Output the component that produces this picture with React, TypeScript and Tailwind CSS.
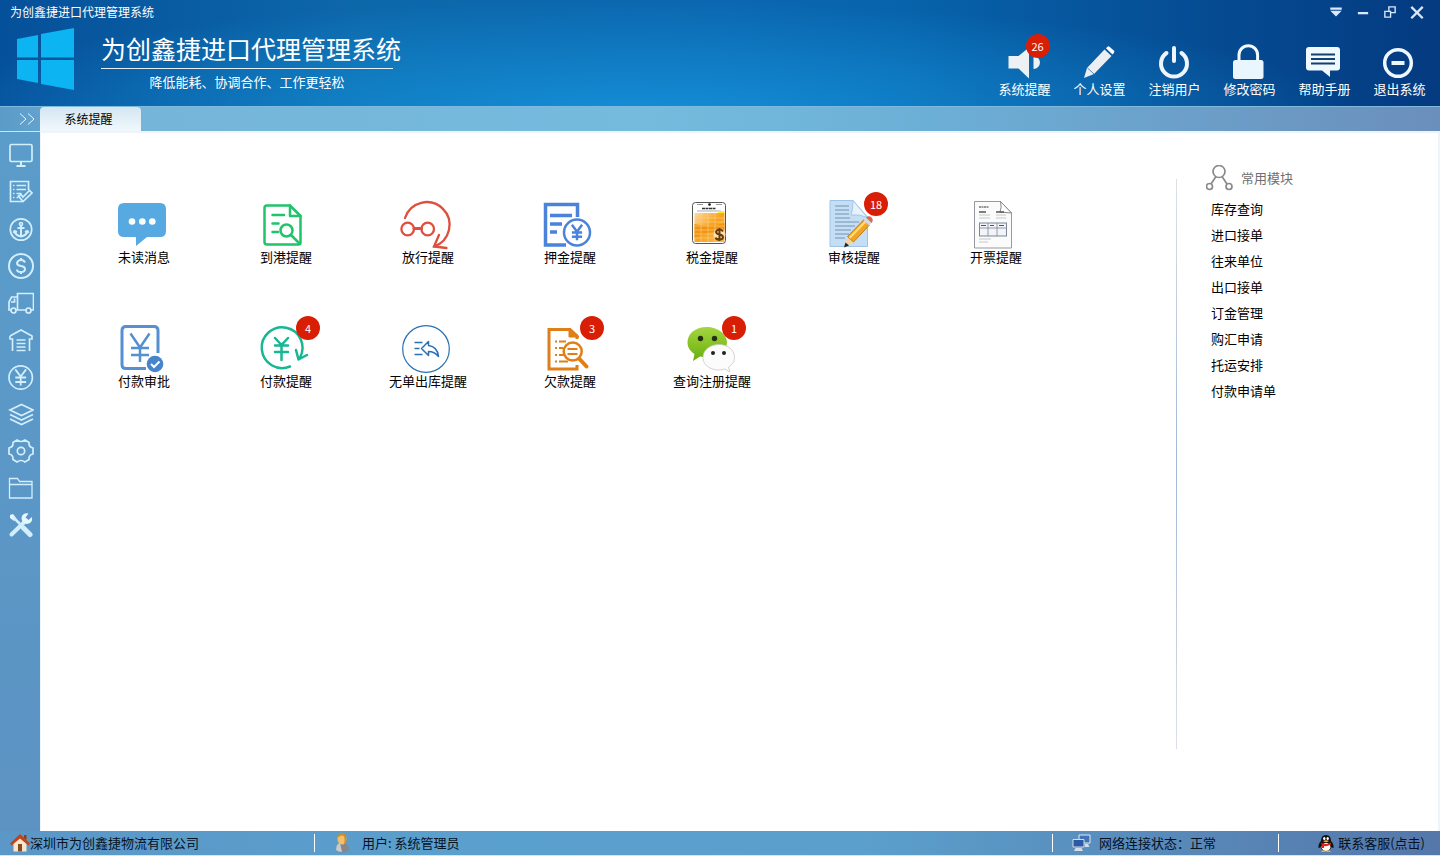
import type { ReactNode } from "react";

interface Item {
  label: string;
  icon: ReactNode;
  badge?: number;
}

const YEN = "M-6 -9L0 -1l6 -8M0 -1v10M-6 0h12M-6 5h12";

const TOOLBAR: Item[] = [
  {
    label: "系统提醒",
    badge: 26,
    icon: (
      <>
        <path d="M3.5 12h10L24 3.5v31L13.5 24.5h-10z" fill="#eef1f4" />
        <path d="M28.5 12a6.5 6.5 0 0 1 0 13z" fill="#eef1f4" />
      </>
    ),
  },
  {
    label: "个人设置",
    icon: (
      <>
        <path d="M7 24L24.5 5.500l7 6.500L14 30 4 34z" fill="#eceff2" />
        <path d="M26 4.2l1.500-1.500q1-.7 2 0l4.500 4q.8 1 0 2L32.500 10.500z" fill="#fff" />
        <path d="M7.500 24l6.500 6" stroke="#5b87b5" strokeWidth="1" />
      </>
    ),
  },
  {
    label: "注销用户",
    icon: (
      <g fill="none" stroke="#eef6fc" strokeWidth="4" strokeLinecap="round">
        <path d="M11.5 9a13 13 0 1 0 15 0" />
        <path d="M19 4v13" />
      </g>
    ),
  },
  {
    label: "修改密码",
    icon: (
      <>
        <path d="M9 18v-7a9.3 9.3 0 0 1 18.6 0v7" fill="none" stroke="#f4fafe" strokeWidth="3" />
        <rect x="3" y="16" width="30.5" height="19" rx="2.5" fill="#eaf6fe" />
      </>
    ),
  },
  {
    label: "帮助手册",
    icon: (
      <>
        <path d="M4 3h28q3 0 3 3v17.500q0 3-3 3h-7V33l-8-6.500H4q-3 0-3-3V6q0-3 3-3z" fill="#f0f9ff" />
        <path d="M6 10.500h24M6 15h24M6 19.500h24" stroke="#123f74" strokeWidth="2" />
      </>
    ),
  },
  {
    label: "退出系统",
    icon: (
      <g fill="none" stroke="#eef7fe">
        <circle cx="18" cy="19" r="13.300" strokeWidth="3.5" />
        <path d="M11.5 19h13" strokeWidth="4" />
      </g>
    ),
  },
];

const SIDEBAR: Item[] = [
  {
    label: "工作台",
    icon: (
      <>
        <rect x="2" y="2.5" width="22" height="17" rx="1.5" />
        <path d="M13 19.500v4M8.500 24h9" strokeWidth="2" />
      </>
    ),
  },
  {
    label: "单据",
    icon: (
      <>
        <path d="M20.500 11V2.500H2.500v20h12" />
        <path d="M5 6.500h1.500M8.500 6.500h9.500M5 10.500h1.500M8.500 10.500h9.500M5 14.500h1.500M8.500 14.500h5M5 18.500h1.500M8.500 18.500h2" />
        <path d="M10.500 17l4.500 5.500 9-8.500-2.500-2.500-6.500 6.500-2-2.500z" />
      </>
    ),
  },
  {
    label: "港口",
    icon: (
      <>
        <circle cx="13" cy="13.5" r="10.7" />
        <circle cx="13" cy="8" r="1.5" />
        <path d="M13 9.500v11M9.500 12h7M6.500 15q1 4.500 6.500 5.500 5.500-1 6.500-5.500M5.500 17l1-2 2.500 1M20.500 17l-1-2-2.500 1" strokeWidth="2" />
      </>
    ),
  },
  {
    label: "费用",
    icon: (
      <>
        <circle cx="13" cy="13" r="12" strokeWidth="2" />
        <path d="M17 9.500q-1-2.500-4-2.500t-4 3q0 2.500 4 3t4 3q0 3-4 3t-4-2.500M13 5v3M13 18v3" strokeWidth="2" />
      </>
    ),
  },
  {
    label: "运输",
    icon: (
      <>
        <path d="M9.500 20V3.500h16V20H23M18 20H8M3 20H1v-8l2.500-5h6M3 12h3.500V8.500" />
        <circle cx="5.5" cy="20.5" r="2.5" />
        <circle cx="20.5" cy="20.5" r="2.5" />
      </>
    ),
  },
  {
    label: "仓库",
    icon: (
      <>
        <path d="M2 9L13 3l11 6v3h-2.500v12M2 9v3h2.500v12" />
        <path d="M8.500 13h9M8.500 16.500h9M8.500 20h9M8.500 23.500h9" />
      </>
    ),
  },
  {
    label: "财务",
    icon: (
      <>
        <circle cx="12.7" cy="13.5" r="11.7" />
        <path d={YEN} transform="translate(12.7 13.5) scale(.9)" strokeWidth="2" />
      </>
    ),
  },
  {
    label: "报表",
    icon: (
      <path d="M13.500 3.500L25 9l-11.500 5.500L2 9zM2 13.500l11.500 5.500L25 13.500M2 18l11.500 5.500L25 18" />
    ),
  },
  {
    label: "设置",
    icon: (
      <>
        <path d="M9 2q4 3 8 0l4 2.500q-.5 4.500 4 5.500v6q-4.500 1-4 5.500L17 24q-4-3-8 0l-4-2.500Q5.500 17 1 16v-6q4.500-1 4-5.500z" />
        <circle cx="13" cy="13" r="3.7" />
      </>
    ),
  },
  {
    label: "文件",
    icon: <path d="M1.500 23V3.500h8l2 3H24V23zM1.500 9.500H24" strokeWidth="1.3" />,
  },
  {
    label: "工具",
    icon: (
      <>
        <path d="M3.500 22.500L18 8.500" strokeWidth="4" strokeLinecap="round" />
        <path d="M24 5l-3.500 3-3-2.500 3-4q-6-1-7 4.500 0 5 5.500 6 6-1 5-7z" fill="#e6f8ff" stroke="none" />
        <path d="M2 3l3-1 3.500 4.500-2.500 2.500-4-3z" fill="#e6f8ff" stroke="none" />
        <path d="M5 5l7 7" strokeWidth="2.500" />
        <path d="M15.500 16l6.500 6.500" strokeWidth="5" strokeLinecap="round" />
      </>
    ),
  },
];

const REMINDERS: Item[] = [
  {
    label: "未读消息",
    icon: (
      <>
        <path d="M6 3h36q6 0 6 6v22q0 6-6 6H29L18 46v-9H6q-6 0-6-6V9q0-6 6-6z" fill="#56a9e1" />
        <g fill="#fff">
          <circle cx="14" cy="21.5" r="3.3" />
          <circle cx="24.3" cy="21.5" r="3.3" />
          <circle cx="34.3" cy="21.5" r="3.3" />
        </g>
      </>
    ),
  },
  {
    label: "到港提醒",
    icon: (
      <g fill="none" stroke="#1fc46b" strokeWidth="2.5" strokeLinejoin="round" strokeLinecap="round">
        <path d="M30 5.500H7q-2.500 0-2.500 2.500v34q0 2.500 2.500 2.500h31.500q2 0 2-2V16z" />
        <path d="M30 5.500V16h10.500M12.500 15H24M12.500 23.500h6M12.500 32H18" />
        <circle cx="26.5" cy="30.5" r="6" />
        <path d="M31 35l8.500 8.500" />
      </g>
    ),
  },
  {
    label: "放行提醒",
    icon: (
      <g fill="none" stroke="#de4f3e" strokeWidth="2.3" strokeLinecap="round">
        <path d="M3 18A22.800 22.800 0 1 1 32 46.500" />
        <path d="M37 35l-5 11.500 12.500 1.500" />
        <circle cx="5.7" cy="29" r="6.3" />
        <circle cx="25.7" cy="29" r="6.3" />
        <path d="M12 28.500h7.500" strokeWidth="3" />
      </g>
    ),
  },
  {
    label: "押金提醒",
    icon: (
      <g fill="none" stroke="#4b83da" strokeWidth="3.5">
        <path d="M33.500 17V4.500h-32v40.500H22" />
        <path d="M6 15.500h22M6 24h12M6 32h7" />
        <circle cx="33" cy="32.5" r="13" strokeWidth="2.5" />
        <path d={YEN} transform="translate(33 32.5) scale(.85)" strokeWidth="3" />
      </g>
    ),
  },
  {
    label: "税金提醒",
    icon: (
      <>
        <defs>
          <linearGradient id="ledger" x1="0" y1="0" x2="1" y2="1">
            <stop offset="0" stopColor="#ffd9a0" />
            <stop offset=".5" stopColor="#f7a21b" />
            <stop offset="1" stopColor="#f9ba55" />
          </linearGradient>
        </defs>
        <rect x="6.5" y="2.5" width="33" height="41" rx="3" fill="#fff" stroke="#555" />
        <path d="M11 4.500h6M30 4.500h6" stroke="#999" />
        <circle cx="23.5" cy="4.5" r="1.3" fill="#111" />
        <path d="M16 8.500h14" stroke="#333" strokeWidth="1.5" strokeDasharray="3 .5" />
        <path d="M11 11h24" stroke="#aaa" />
        <rect x="8.5" y="13" width="30" height="29" fill="url(#ledger)" />
        <path d="M8.500 24q14 4 30-1v7q-14 1-30 8z" fill="#f3940f" />
        <path d="M8.500 18h30M8.500 22h30M8.500 26h30M8.500 30h30M8.500 34h30M8.500 38h30M15 13v29M22 13v29M29 13v29" stroke="#fbd28f" strokeWidth=".6" />
        <path d="M32 11h6.500v2H32z" fill="#ffe92e" />
        <circle cx="33.5" cy="34.5" r="6" fill="#ffe0ae" />
        <path d="M37 31.500q-1-2-3.500-2t-3.500 2.300q0 2 3.500 2.700t3.500 2.700q0 2.300-3.500 2.300t-3.800-2M33.500 28v13" fill="none" stroke="#6b3b05" strokeWidth="2" />
      </>
    ),
  },
  {
    label: "审核提醒",
    badge: 18,
    icon: (
      <>
        <path d="M2 .500h23L39.500 17v29.500H2z" fill="#c3def5" stroke="#9fc3e4" />
        <path d="M25 .500q0 10-2 14.500 9-1 16.500 2.500z" fill="#e6f2fc" stroke="#a9c7e2" />
        <path d="M7 6h14M7 10h14M7 14h14M7 18h15M7 22h24M7 26h20M7 30h16M7 34h14M7 38h10" stroke="#5f7f9f" strokeWidth=".8" />
        <path d="M16 47l4-11 6 6z" fill="#f4d3a1" />
        <path d="M19.500 36.500L36 19.500l5.500 5.500L25.500 42z" fill="#f5a51d" stroke="#a76408" strokeWidth=".7" />
        <path d="M21.500 38L38 21" stroke="#ffdd80" strokeWidth="2" />
        <path d="M35.500 20l2.500-2.500 5.500 5.500-2.500 2.500z" fill="#d5dbe3" />
        <path d="M38 17.500q3-2.500 5.500 0t0 5.500z" fill="#d96a4c" />
        <path d="M16 47.500l1.500-5 3.500 3z" fill="#222" />
      </>
    ),
  },
  {
    label: "开票提醒",
    icon: (
      <>
        <path d="M4.500 1.500h26L41.500 13v35h-37z" fill="#fbfbfc" stroke="#969a9f" />
        <path d="M30.500 1.500q1.500 6-.5 10.500l11.500 1z" fill="#fff" stroke="#85898e" />
        <path d="M9 7h10" stroke="#777" strokeWidth="1.5" strokeDasharray="2 .5" />
        <path d="M9 12h7M26 12h8" stroke="#555" strokeWidth="1.5" />
        <path d="M9 15h11M9 18h11M26 15h10M26 18h10M9 39h12M9 42h9" stroke="#bbb" strokeWidth=".8" />
        <rect x="9.5" y="23" width="27" height="13" fill="#f1f4f9" stroke="#7d8795" />
        <path d="M9.500 28h27M18 23v13M27 23v13" stroke="#7d8795" strokeWidth=".8" />
        <path d="M11 25.500h5M20 25.500h4M29 25.500h5" stroke="#556" />
      </>
    ),
  },
  {
    label: "付款审批",
    icon: (
      <>
        <g fill="none" stroke="#5590d0" strokeWidth="3">
          <path d="M28 44.500H8q-4 0-4-4v-34q0-4 4-4H36q4 0 4 4V29" />
          <path d="M12.500 9.500l9.500 14 9.500-14M22 23.500V38M13 24h18M13 31h18" strokeWidth="2.500" />
        </g>
        <circle cx="37" cy="40" r="8.3" fill="#4685cc" />
        <path d="M33 40l3 3 5.500-5.500" fill="none" stroke="#fff" strokeWidth="2" />
      </>
    ),
  },
  {
    label: "付款提醒",
    badge: 4,
    icon: (
      <g fill="none" stroke="#17b794" strokeWidth="2.5" strokeLinecap="round" strokeLinejoin="round">
        <path d="M30 42.500A20.400 20.400 0 1 1 40 33.500M36 26l2.500 9.500 8.500-4.500" />
        <path d="M15 14l6.500 7 6.500-7M21.500 21v15M15 21.500h13M15 28h13" />
      </g>
    ),
  },
  {
    label: "无单出库提醒",
    icon: (
      <g fill="none" stroke="#2a70b5" strokeWidth="1.5">
        <circle cx="24" cy="25" r="23.300" strokeWidth="1.2" />
        <path d="M12.500 18.500h8M12.500 24.500h5M12.500 30.500h8" />
        <path d="M19.500 24.500l7-7v4q9 1 10 11-4-5-10-5v4z" strokeLinejoin="round" />
      </g>
    ),
  },
  {
    label: "欠款提醒",
    badge: 3,
    icon: (
      <g fill="none" stroke="#e07f17">
        <path d="M33 15v-3l-7-6.500H5v39.500H33v-4" strokeWidth="3" />
        <path d="M25 4v9h10z" fill="#e07f17" />
        <path d="M11 17.500h2M15 17.500h7M11 24h2M15 24h4M11 31h2M15 31h5M11 37.500h2M15 37.500h9" strokeWidth="2" />
        <circle cx="28.7" cy="27.5" r="9" fill="#fff" strokeWidth="2.500" />
        <path d="M23.500 25h10M23.500 30h10" strokeWidth="2" />
        <path d="M35.500 35l7 7.500" strokeWidth="4" strokeLinecap="round" />
      </g>
    ),
  },
  {
    label: "查询注册提醒",
    badge: 1,
    icon: (
      <>
        <defs>
          <linearGradient id="chat" x1="0" y1="0" x2="0" y2="1">
            <stop offset="0" stopColor="#a4d63f" />
            <stop offset="1" stopColor="#69ae0d" />
          </linearGradient>
        </defs>
        <path d="M20.700 3C9 3 1.500 10 1.500 18.500c0 5 3 9 7 11.500L7 37l7-4.500c2 .5 5 1 7 1 11 0 20-6.500 20-15S31.500 3 20.700 3z" fill="url(#chat)" />
        <circle cx="14.500" cy="14.500" r="2.700" fill="#243015" />
        <circle cx="28.500" cy="14.500" r="2.700" fill="#243015" />
        <path d="M33 20.500c-9 0-16 5.500-16 13S24 46 33 46c2 0 4-.3 6-1l5 3-1.500-5c4-2.500 6-5.500 6-9.500C48.500 26 42 20.500 33 20.500z" fill="#fcfcfc" stroke="#c5c9c0" strokeWidth=".8" />
        <circle cx="27" cy="29" r="2" fill="#222" />
        <circle cx="38" cy="29" r="2" fill="#222" />
      </>
    ),
  },
];

const MODULES = ["库存查询", "进口接单", "往来单位", "出口接单", "订金管理", "购汇申请", "托运安排", "付款申请单"];

const WINDOW_CONTROLS: Item[] = [
  { label: "菜单", icon: <path d="M2 3h10v2H2zM2 6h10l-5 5z" fill="#dbe8fb" stroke="none" /> },
  { label: "最小化", icon: <path d="M2.500 8h9" strokeWidth="2" /> },
  { label: "还原", icon: <path d="M2.500 6.500h5v5h-5zM6 6V2.500h5.500v5H8" strokeWidth="1.200" /> },
  { label: "关闭", icon: <path d="M2 2.500l10 10M12 2.500l-10 10" strokeWidth="2" /> },
];

function Badge({ count, className }: { count: number; className: string }) {
  return (
    <span
      className={`absolute flex size-6 items-center justify-center rounded-full bg-[#d91e06] text-[11px] leading-none text-white ${className}`}
    >
      {count}
    </span>
  );
}

function Header() {
  return (
    <header className="flex h-[106px] justify-between bg-[radial-gradient(ellipse_50%_110%_at_44%_110%,rgba(22,150,222,0.85),transparent),linear-gradient(to_right,#05509a,#0d68aa_25%,#0b67b0_50%,#0763ab_63%,#043a80)] text-white">
      <div className="pt-1 pl-[10px]">
        <p className="text-xs leading-4">为创鑫捷进口代理管理系统</p>
        <div className="flex gap-[27px] pt-2 pl-[7px]">
          <svg viewBox="0 0 57 62" className="h-[62px] w-[57px]" fill="#0db4f2">
            <path d="M0 11l21-4v22.500H0zM24 6l33-6v29.500H24zM0 32h21v23L0 51zM24 32h33v30l-33-6z" />
          </svg>
          <div className="w-[292px] pt-1">
            <h1 className="border-b border-white/90 pb-1 text-[25px] leading-8 whitespace-nowrap">
              为创鑫捷进口代理管理系统
            </h1>
            <p className="pt-1 text-center text-[13px] leading-[18px]">降低能耗、协调合作、工作更轻松</p>
          </div>
        </div>
      </div>
      <div className="flex flex-col items-end justify-between pt-1 pb-2">
        <div className="flex pr-[10px]">
          {WINDOW_CONTROLS.map(c => (
            <button key={c.label} type="button" aria-label={c.label} className="flex w-[27px] justify-center">
              <svg viewBox="0 0 14 14" className="size-4" fill="none" stroke="#dbe8fb">
                {c.icon}
              </svg>
            </button>
          ))}
        </div>
        <nav className="flex pr-[3px]">
          {TOOLBAR.map(t => (
            <button key={t.label} type="button" className="flex w-[75px] flex-col items-center text-[13px] leading-[18px]">
              <span className="relative">
                <svg viewBox="0 0 40 36" className="h-9 w-10">{t.icon}</svg>
                {t.badge && <Badge count={t.badge} className="-top-[10px] left-[21px]" />}
              </span>
              {t.label}
            </button>
          ))}
        </nav>
      </div>
    </header>
  );
}

function TabBar() {
  return (
    <div className="flex h-[25px] border-t border-[#7fb9de] bg-[linear-gradient(to_right,#5b9bc8,#76b5da_10%,#74bbde_45%,#6cafd6_65%,#6b8fbc)]">
      <button type="button" aria-label="展开" className="flex w-10 items-center justify-end pr-[5px]">
        <svg viewBox="0 0 16 12" className="h-3 w-4" fill="none" stroke="#e6f6ff">
          <path d="M1 .500l6 5.500-6 5.500M9 .500L15 6l-6 5.500" />
        </svg>
      </button>
      <button
        type="button"
        className="w-[101px] rounded-t-sm bg-linear-to-b from-[#d3e6f1] to-[#f1f8fc] pr-1 pb-px text-xs text-black"
      >
        系统提醒
      </button>
    </div>
  );
}

function Sidebar() {
  return (
    <nav className="flex w-10 shrink-0 flex-col gap-[11px] border-t border-[#c9e6f7] bg-linear-to-b from-[#5a9cca] to-[#5c93c3] pt-[10px] pl-2">
      {SIDEBAR.map(s => (
        <button key={s.label} type="button" aria-label={s.label} className="size-[26px]">
          <svg viewBox="0 0 26 26" className="size-[26px]" fill="none" stroke="#d3eefc" strokeWidth="1.7">
            {s.icon}
          </svg>
        </button>
      ))}
    </nav>
  );
}

function Footer() {
  return (
    <footer className="flex h-[25px] items-center justify-between border-b border-[#d5e6f3] bg-[linear-gradient(to_right,#5b97c7,#5aa0ce_35%,#5b9fcc_60%,#5577aa)] text-[13px] leading-[18px] text-[#06121f]">
      <div className="flex items-center">
        <div className="flex w-[315px] items-center border-r border-white pl-[10px]">
          <svg viewBox="0 0 20 18" className="h-[18px] w-5">
            <path d="M3.500 9L10 3l6.500 6v8.500h-13z" fill="#f5e6cc" />
            <path d="M14 1h2.500v5L14 4z" fill="#9c3a16" />
            <path d="M0 9.500L10 0l10 9.500-1.500 2L10 4.500l-8.500 7z" fill="#c0441a" />
            <path d="M8 10h4v7.500H8z" fill="#8a4a20" />
          </svg>
          深圳市为创鑫捷物流有限公司
        </div>
        <div className="flex items-center gap-3 pl-[19px]">
          <svg viewBox="0 0 16 20" className="h-5 w-4">
            <path d="M2 17q0-7 6.500-7t6.500 7q-2.500 2.500-6.500 2.500T2 17z" fill="#85878c" />
            <path d="M2 17q0-6 4-7l2 9q-4 0-6-2z" fill="#c9cacc" />
            <ellipse cx="8" cy="6" rx="4.500" ry="5.500" fill="#f3c06a" />
            <path d="M3.500 5Q3.500 0 8 0t4.500 6q0 4-2.500 5 1.500-4 0-8-3-1.500-6.500 2z" fill="#d08a2c" />
          </svg>
          用户: 系统管理员
        </div>
      </div>
      <div className="flex items-center">
        <div className="flex w-[226px] items-center gap-2 border-l border-white pl-[19px]">
          <svg viewBox="0 0 19 18" className="h-[18px] w-[19px]">
            <path d="M7 1h11v8H7z" fill="#3f74ba" stroke="#e5e9ee" />
            <path d="M1 5.500h11v7.500H1z" fill="#2b59a3" stroke="#d7dce3" />
            <path d="M3.500 14h6l1.500 3h-9zM13 10h3l1.500 3h-4.500z" fill="#d7dce3" />
          </svg>
          网络连接状态：正常
        </div>
        <div className="flex w-[162px] items-center justify-end border-l border-white pr-[15px]">
          <a href="#service" className="flex items-center gap-1">
            <svg viewBox="0 0 16 17" className="h-[17px] w-4">
              <path d="M8 0q5 0 5 6 3 3 2.500 7-1.500 0-2-1-1 4-5.500 4t-5.500-4q-.5 1-2 1Q0 9 3 6q0-6 5-6z" fill="#111" />
              <ellipse cx="8" cy="12" rx="4.500" ry="4" fill="#fff" />
              <ellipse cx="6.300" cy="3.500" rx="1.200" ry="1.600" fill="#fff" />
              <ellipse cx="9.700" cy="3.500" rx="1.200" ry="1.600" fill="#fff" />
              <path d="M5 6q3-1.500 6 0-3 2.500-6 0zM4 15.500h3.500V17H3zM8.500 15.500H12l1 1.500H8.500z" fill="#f7a81b" />
              <path d="M3 7.500q5 3 10 0v2q-5 2.500-7 1.500v2H4v-3z" fill="#e02417" />
            </svg>
            联系客服(点击)
          </a>
        </div>
      </div>
    </footer>
  );
}

export default function App() {
  return (
    <div className="flex min-h-screen flex-col font-['Noto_Sans_CJK_SC',sans-serif] text-black">
      <Header />
      <TabBar />
      <div className="flex flex-1">
        <Sidebar />
        <main className="flex flex-1 border-t-2 border-r-2 border-l border-[#edf4fb] bg-white">
          <section className="grid flex-1 grid-cols-[repeat(auto-fill,142px)] content-start gap-y-[58px] pt-[67px] pl-8">
            {REMINDERS.map(r => (
              <button key={r.label} type="button" className="flex flex-col items-center text-[13px] leading-[18px]">
                <span className="relative">
                  <svg viewBox="0 0 52 48" className="h-12 w-13 overflow-visible">{r.icon}</svg>
                  {r.badge && <Badge count={r.badge} className="-top-2 left-9" />}
                </span>
                {r.label}
              </button>
            ))}
          </section>
          <div className="mt-[46px] mb-[82px] w-px bg-linear-to-b from-[#dde1e6] via-[#9fb6d4] to-[#dde1e6]" />
          <aside className="w-[261px] pt-8 pl-[29px]">
            <h2 className="flex items-center gap-2 text-[13px] leading-[18px] text-[#6f6f6f]">
              <svg viewBox="0 0 27 26" className="h-[26px] w-[27px]" fill="none" stroke="#8a8a8a" strokeWidth="1.700">
                <circle cx="13" cy="6.500" r="6" />
                <circle cx="3.500" cy="21.500" r="3" />
                <circle cx="23" cy="21.500" r="3" />
                <path d="M10 11.500l-5 7.500M16 11.500l5 7.500" />
              </svg>
              常用模块
            </h2>
            <ul className="pt-[5px] pl-[5px] text-[13px] leading-[26px]">
              {MODULES.map(m => (
                <li key={m}>
                  <a href="#module">{m}</a>
                </li>
              ))}
            </ul>
          </aside>
        </main>
      </div>
      <Footer />
    </div>
  );
}
